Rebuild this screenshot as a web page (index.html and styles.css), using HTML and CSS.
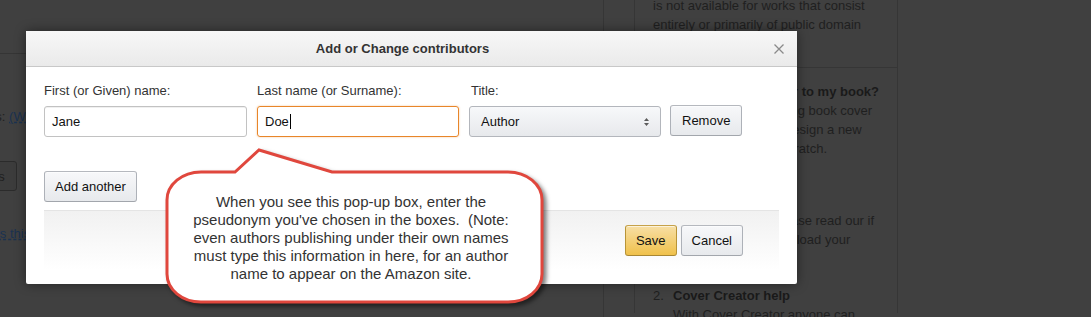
FILE: index.html
```html
<!DOCTYPE html>
<html lang="en">

<head>
    <meta charset="utf-8">
    <meta name="viewport" content="width=device-width, initial-scale=1.0">
    <title>Add or Change contributors</title>
    <link rel="stylesheet" href="styles.css">
</head>

<body>
    <div class="page">
        <section class="main">
            <div class="main-top"></div>
            <p class="row-label">Contributors: <span class="help">(What's this?)</span></p>
            <button class="bg-btn">Contributors</button>
            <p class="row-help"><span class="help">What's this?</span></p>
        </section>

        <aside class="side">
            <div class="side-box">
                <p class="side-intro">is not available for works that consist<br>entirely or primarily of public domain<br>content.</p>
                <ol class="side-list">
                    <li>
                        <span class="num">1.</span>
                        <div>
                            <h3>How do I add a cover to my book?</h3>
                            <p>You can use an existing book cover<br>images, or you may design a new<br>cover, entirely from scratch.</p>
                            <p class="later">Before you begin, please read our if<br>you are planning to upload your<br>own cover.</p>
                        </div>
                    </li>
                    <li class="second">
                        <span class="num">2.</span>
                        <div>
                            <h3>Cover Creator help</h3>
                            <p>With Cover Creator anyone can<br>make a cover.</p>
                        </div>
                    </li>
                </ol>
            </div>
        </aside>
    </div>

    <!-- the modal -->
    <div class="dialog">
        <div class="dialog-head">
            <span></span>
            <h2>Add or Change contributors</h2>
            <button class="close" aria-label="Close">
                <svg width="10" height="10" viewBox="0 0 10 10">
                    <path d="M0.5 0.5 L9.5 9.5 M9.5 0.5 L0.5 9.5" stroke="#8a8a8a" stroke-width="1.3" fill="none" />
                </svg>
            </button>
        </div>

        <div class="dialog-body">
            <div class="fields">
                <div class="field first">
                    <label>First (or Given) name:</label>
                    <div class="text-box">Jane</div>
                </div>
                <div class="field last">
                    <label>Last name (or Surname):</label>
                    <div class="text-box focused">Doe<span class="caret"></span></div>
                </div>
                <div class="field title">
                    <label>Title:</label>
                    <div class="select-box">
                        <span>Author</span>
                        <svg width="5" height="8" viewBox="0 0 5 8">
                            <path d="M0 3 L2.5 0 L5 3 Z M0 5 L2.5 8 L5 5 Z" fill="#5c5c5c" />
                        </svg>
                    </div>
                </div>
                <button class="btn remove">Remove</button>
            </div>

            <div class="add-row">
                <button class="btn">Add another</button>
            </div>

            <div class="dialog-foot">
                <button class="btn save">Save</button>
                <button class="btn">Cancel</button>
            </div>
        </div>
    </div>

    <!-- callout over the modal -->
    <svg class="bubble" width="410" height="180" viewBox="0 0 410 180">
        <path d="M51 32 L85 32 L109 10 L182 32 L358 32 A34 28 0 0 1 392 60 L392 134 A34 28 0 0 1 358 162 L51 162 A34 28 0 0 1 17 134 L17 60 A34 28 0 0 1 51 32 Z"
            fill="#fff" stroke="#e0473d" stroke-width="3" stroke-linejoin="miter" />
    </svg>
    <p class="bubble-text">When you see this pop-up box, enter the<br>pseudonym you've chosen in the boxes.&nbsp; (Note:<br>even authors publishing under their own names<br>must type this information in here, for an author<br>name to appear on the Amazon site.</p>
</body>

</html>
```

FILE: styles.css
```css
* {
    box-sizing: border-box;
}

body {
    margin: 0;
    width: 1091px;
    height: 317px;
    overflow: hidden;
    position: relative;
    background: #404040;
    font-family: "Liberation Sans", Arial, sans-serif;
    font-size: 13px;
    color: #1f1f1f;
}

p,
h2,
h3 {
    margin: 0;
}

button {
    font-family: "Liberation Sans", Arial, sans-serif;
    font-size: 13px;
}

/* dimmed page behind the modal */

.page {
    display: flex;
    height: 317px;
    overflow: hidden;
}

.main {
    flex: 0 0 681px;
    margin-left: -78px;
}

.main-top {
    height: 54px;
    border-bottom: 1px solid #353535;
}

.row-label {
    margin: 55px 0 0 9px;
    line-height: 16px;
}

.help {
    color: #1b3250;
    text-decoration: underline dashed;
}

.bg-btn {
    display: block;
    margin-top: 36px;
    height: 30px;
    padding: 0 11px;
    border: 1px solid #2b2b2b;
    border-radius: 3px;
    background: #3c3c3c;
    color: #1f1f1f;
}

.row-help {
    margin: 35px 0 0 45px;
    line-height: 16px;
}

.side {
    flex: 0 0 auto;
    border-left: 1px solid #363636;
    padding-left: 30px;
}

.side-box {
    width: 264px;
    height: 317px;
    border-left: 1px solid #363636;
    border-right: 1px solid #363636;
    line-height: 19px;
    white-space: nowrap;
}

.side-intro {
    margin-top: -4px;
    padding: 0 18px;
}

.side-list {
    list-style: none;
    margin: 14px 0 0;
    padding: 14px 18px 0;
    border-top: 1px solid #363636;
}

.side-list li {
    display: flex;
}

.side-list .num {
    width: 20px;
}

.side-list h3 {
    font-size: 13px;
    color: #1a1a1a;
}

.side-list .later {
    margin-top: 53px;
}

.side-list .second {
    margin-top: 18px;
}

/* modal */

.dialog {
    position: absolute;
    left: 26px;
    top: 31px;
    width: 771px;
    height: 253px;
    background: #fff;
    border-radius: 2px;
    box-shadow: 0 0 12px rgba(0, 0, 0, .45);
    display: flex;
    flex-direction: column;
    z-index: 2;
}

.dialog-head {
    height: 36px;
    flex: 0 0 36px;
    border-bottom: 1px solid #c8c8c8;
    background: linear-gradient(#f7f7f7, #eaeaea);
    display: grid;
    grid-template-columns: 1fr auto 1fr;
    align-items: center;
}

.dialog-head h2 {
    margin-right: 18px;
    font-size: 13px;
    font-weight: bold;
    color: #333;
}

.close {
    justify-self: end;
    margin-right: 13px;
    padding: 0;
    border: 0;
    background: none;
    width: 10px;
    height: 10px;
    display: flex;
}

.dialog-body {
    flex: 1;
    display: flex;
    flex-direction: column;
    padding: 16px 18px 3px;
}

.fields {
    display: flex;
    align-items: flex-end;
    gap: 10px;
}

.field {
    display: flex;
    flex-direction: column;
    gap: 7px;
}

.field label {
    line-height: 16px;
    color: #333;
}

.field.first {
    width: 203px;
}

.field.last {
    width: 202px;
}

.field.title {
    width: 192px;
    margin-right: -1px;
}

.field.title label {
    padding-left: 2px;
}

.text-box {
    height: 31px;
    padding: 0 7px;
    display: flex;
    align-items: center;
    border: 1px solid #c2c2c2;
    border-radius: 3px;
    box-shadow: inset 0 1px 0 rgba(0, 0, 0, .06);
    color: #111;
}

.text-box.focused {
    border-color: #e8862a;
    box-shadow: 0 0 2px rgba(228, 121, 17, .45);
}

.caret {
    width: 1px;
    height: 15px;
    margin-left: 1px;
    background: #000;
}

.select-box {
    height: 31px;
    padding: 0 11px;
    display: flex;
    align-items: center;
    justify-content: space-between;
    border: 1px solid #b3b6bc;
    border-radius: 3px;
    background: linear-gradient(#f7f8fa, #e7e9ec);
    color: #111;
}

.btn {
    height: 31px;
    padding: 0 10px;
    border: 1px solid;
    border-color: #b5b8be #adb1b8 #a2a6ac;
    border-radius: 3px;
    background: linear-gradient(#f7f8fa, #e7e9ec);
    box-shadow: inset 0 1px 0 rgba(255, 255, 255, .6);
    color: #111;
}

.btn.remove {
    padding: 0 11px;
    margin-bottom: 1px;
}

.add-row {
    margin-top: 34px;
}

.dialog-foot {
    flex: 1;
    margin-top: 8px;
    padding: 14px 36px 0 0;
    display: flex;
    justify-content: flex-end;
    align-items: flex-start;
    gap: 4px;
    border-top: 1px solid #e4e4e4;
    background: linear-gradient(#f1f1f1, #fff 85%);
}

.btn.save {
    border-color: #c6a24a #b89437 #a88734;
    background: linear-gradient(#f7dfa5, #f0c14b);
}

/* callout */

.bubble {
    position: absolute;
    left: 150px;
    top: 140px;
    z-index: 3;
    filter: drop-shadow(3px 3px 2px rgba(0, 0, 0, .5));
}

.bubble-text {
    position: absolute;
    left: 164px;
    top: 193px;
    width: 374px;
    z-index: 4;
    font-size: 15px;
    line-height: 18px;
    text-align: center;
    white-space: nowrap;
    color: #333;
}
```
